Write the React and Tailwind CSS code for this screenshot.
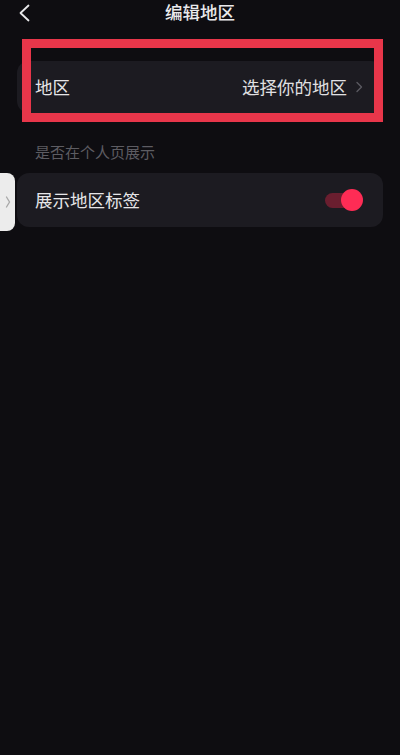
export default function App() {
  const font = { fontFamily: '"Noto Sans CJK SC", "Noto Sans", sans-serif' };
  return (
    <div className="relative w-[400px] h-[755px] bg-[#0e0d11] overflow-hidden" style={font}>
      {/* Header */}
      <div className="relative h-[24px] flex items-center justify-center">
        <svg className="absolute left-[18px] top-[4px]" width="13" height="18" viewBox="0 0 13 18">
          <path d="M10.5 1.5 L2.5 9 L10.5 16.5" fill="none" stroke="#e8e8ea" strokeWidth="1.8" strokeLinecap="round" strokeLinejoin="round" />
        </svg>
        <span className="text-[17.5px] leading-none text-[#e9e9eb] font-medium">编辑地区</span>
      </div>

      <div className="px-[17px] pt-[37px]">
        {/* Region row */}
        <div className="h-[52px] rounded-[12px] bg-[#1c1b21] flex items-center pl-[18px] pr-[20px]">
          <span className="text-[17.5px] text-[#e6e6e8] flex-1">地区</span>
          <span className="text-[17.5px] text-[#e0e0e2]">选择你的地区</span>
          <svg className="ml-[8px]" width="8" height="12" viewBox="0 0 8 12">
            <path d="M2 1.5 L6.5 6 L2 10.5" fill="none" stroke="#5a5960" strokeWidth="1.4" strokeLinecap="round" strokeLinejoin="round" />
          </svg>
        </div>

        <div className="pl-[18px] pt-[29px] pb-[11px] text-[15px] leading-[20px] text-[#5d5c62]">是否在个人页展示</div>

        {/* Toggle row */}
        <div className="h-[54px] rounded-[12px] bg-[#1c1b21] flex items-center pl-[18px] pr-[20px]">
          <span className="text-[17.5px] text-[#e6e6e8] flex-1">展示地区标签</span>
          <div className="relative w-[38px] h-[22px]">
            <div className="absolute left-0 top-[4px] w-[30px] h-[15px] rounded-full bg-[#6a1e2f]" />
            <div className="absolute right-0 top-0 w-[22px] h-[22px] rounded-full bg-[#fe2c55]" />
          </div>
        </div>
      </div>

      {/* Red highlight overlay */}
      <div className="absolute left-[22px] top-[39px] w-[361px] h-[83px] border-[9px] border-[#e8364a]" />

      {/* Left edge tab */}
      <div className="absolute left-0 top-[173px] w-[15px] h-[58px] bg-[#ececec] rounded-r-[8px] flex items-center justify-center">
        <svg width="6" height="14" viewBox="0 0 6 14">
          <path d="M1.5 2 L4.5 7 L1.5 12" fill="none" stroke="#a8a8a8" strokeWidth="1.3" strokeLinecap="round" />
        </svg>
      </div>
    </div>
  );
}
